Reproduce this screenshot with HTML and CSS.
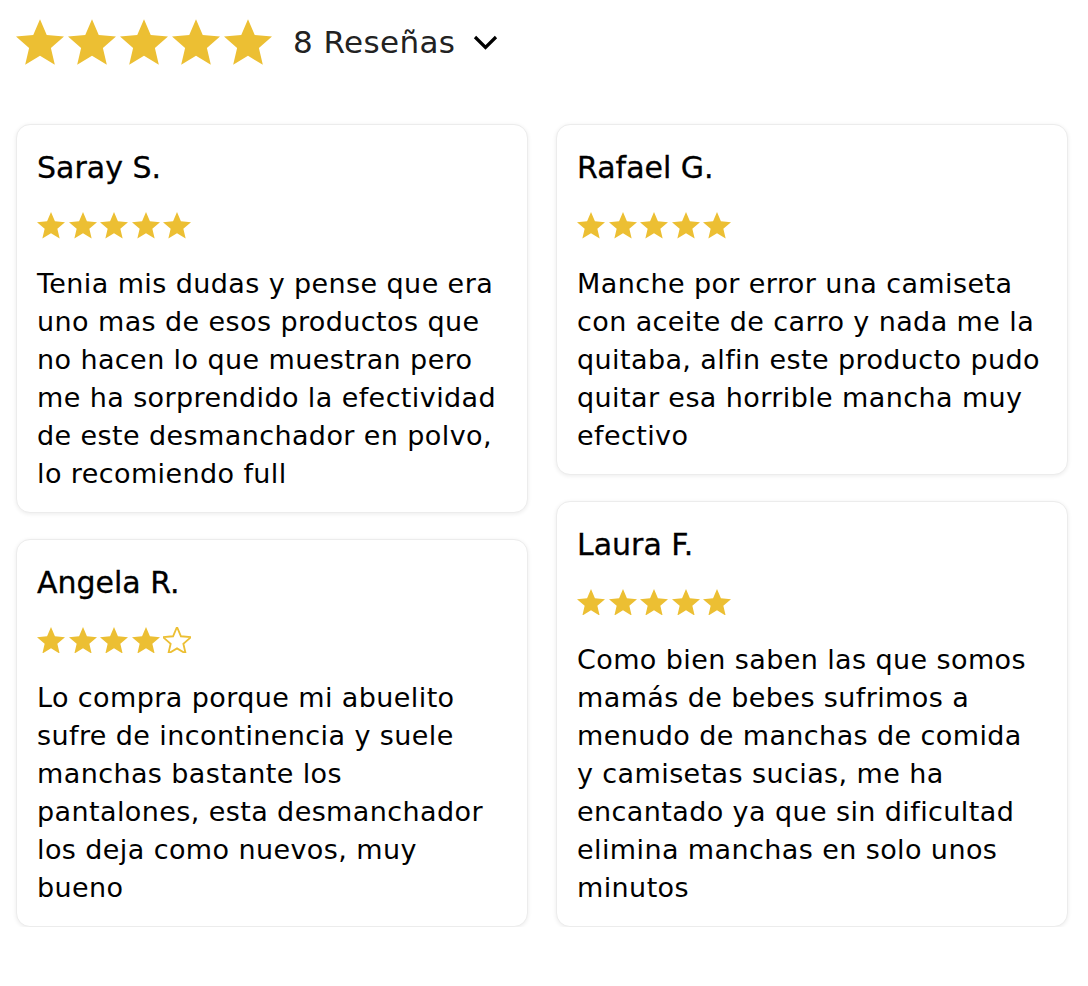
FILE: index.html
```html
<!DOCTYPE html>
<html lang="es">
<head>
<meta charset="utf-8">
<title>Reseñas</title>
<link rel="stylesheet" href="styles.css">
</head>
<body>
<header class="summary">
  <div class="stars stars-lg">
    <svg viewBox="2 2 20 19"><path d="M12 17.27L18.18 21l-1.64-7.03L22 9.24l-7.19-.61L12 2 9.19 8.63 2 9.24l5.46 4.73L5.82 21z"/></svg>
    <svg viewBox="2 2 20 19"><path d="M12 17.27L18.18 21l-1.64-7.03L22 9.24l-7.19-.61L12 2 9.19 8.63 2 9.24l5.46 4.73L5.82 21z"/></svg>
    <svg viewBox="2 2 20 19"><path d="M12 17.27L18.18 21l-1.64-7.03L22 9.24l-7.19-.61L12 2 9.19 8.63 2 9.24l5.46 4.73L5.82 21z"/></svg>
    <svg viewBox="2 2 20 19"><path d="M12 17.27L18.18 21l-1.64-7.03L22 9.24l-7.19-.61L12 2 9.19 8.63 2 9.24l5.46 4.73L5.82 21z"/></svg>
    <svg viewBox="2 2 20 19"><path d="M12 17.27L18.18 21l-1.64-7.03L22 9.24l-7.19-.61L12 2 9.19 8.63 2 9.24l5.46 4.73L5.82 21z"/></svg>
  </div>
  <span class="count">8 Reseñas</span>
  <svg class="chevron" viewBox="0 0 25 16"><path d="M2 3l10.5 10.5L23 3"/></svg>
</header>

<main class="reviews">
  <div class="column">
    <article class="card">
      <h3 class="name">Saray S.</h3>
      <div class="stars stars-sm">
        <svg viewBox="2 2 20 19"><path d="M12 17.27L18.18 21l-1.64-7.03L22 9.24l-7.19-.61L12 2 9.19 8.63 2 9.24l5.46 4.73L5.82 21z"/></svg>
        <svg viewBox="2 2 20 19"><path d="M12 17.27L18.18 21l-1.64-7.03L22 9.24l-7.19-.61L12 2 9.19 8.63 2 9.24l5.46 4.73L5.82 21z"/></svg>
        <svg viewBox="2 2 20 19"><path d="M12 17.27L18.18 21l-1.64-7.03L22 9.24l-7.19-.61L12 2 9.19 8.63 2 9.24l5.46 4.73L5.82 21z"/></svg>
        <svg viewBox="2 2 20 19"><path d="M12 17.27L18.18 21l-1.64-7.03L22 9.24l-7.19-.61L12 2 9.19 8.63 2 9.24l5.46 4.73L5.82 21z"/></svg>
        <svg viewBox="2 2 20 19"><path d="M12 17.27L18.18 21l-1.64-7.03L22 9.24l-7.19-.61L12 2 9.19 8.63 2 9.24l5.46 4.73L5.82 21z"/></svg>
      </div>
      <p class="text">Tenia mis dudas y pense que era uno mas de esos productos que no hacen lo que muestran pero me ha sorprendido la efectividad de este desmanchador en polvo, lo recomiendo full</p>
    </article>
    <article class="card">
      <h3 class="name">Angela R.</h3>
      <div class="stars stars-sm">
        <svg viewBox="2 2 20 19"><path d="M12 17.27L18.18 21l-1.64-7.03L22 9.24l-7.19-.61L12 2 9.19 8.63 2 9.24l5.46 4.73L5.82 21z"/></svg>
        <svg viewBox="2 2 20 19"><path d="M12 17.27L18.18 21l-1.64-7.03L22 9.24l-7.19-.61L12 2 9.19 8.63 2 9.24l5.46 4.73L5.82 21z"/></svg>
        <svg viewBox="2 2 20 19"><path d="M12 17.27L18.18 21l-1.64-7.03L22 9.24l-7.19-.61L12 2 9.19 8.63 2 9.24l5.46 4.73L5.82 21z"/></svg>
        <svg viewBox="2 2 20 19"><path d="M12 17.27L18.18 21l-1.64-7.03L22 9.24l-7.19-.61L12 2 9.19 8.63 2 9.24l5.46 4.73L5.82 21z"/></svg>
        <svg class="empty" viewBox="2 2 20 19"><path d="M12 17.27L18.18 21l-1.64-7.03L22 9.24l-7.19-.61L12 2 9.19 8.63 2 9.24l5.46 4.73L5.82 21z"/></svg>
      </div>
      <p class="text">Lo compra porque mi abuelito sufre de incontinencia y suele manchas bastante los pantalones, esta desmanchador los deja como nuevos, muy bueno</p>
    </article>
  </div>
  <div class="column">
    <article class="card">
      <h3 class="name">Rafael G.</h3>
      <div class="stars stars-sm">
        <svg viewBox="2 2 20 19"><path d="M12 17.27L18.18 21l-1.64-7.03L22 9.24l-7.19-.61L12 2 9.19 8.63 2 9.24l5.46 4.73L5.82 21z"/></svg>
        <svg viewBox="2 2 20 19"><path d="M12 17.27L18.18 21l-1.64-7.03L22 9.24l-7.19-.61L12 2 9.19 8.63 2 9.24l5.46 4.73L5.82 21z"/></svg>
        <svg viewBox="2 2 20 19"><path d="M12 17.27L18.18 21l-1.64-7.03L22 9.24l-7.19-.61L12 2 9.19 8.63 2 9.24l5.46 4.73L5.82 21z"/></svg>
        <svg viewBox="2 2 20 19"><path d="M12 17.27L18.18 21l-1.64-7.03L22 9.24l-7.19-.61L12 2 9.19 8.63 2 9.24l5.46 4.73L5.82 21z"/></svg>
        <svg viewBox="2 2 20 19"><path d="M12 17.27L18.18 21l-1.64-7.03L22 9.24l-7.19-.61L12 2 9.19 8.63 2 9.24l5.46 4.73L5.82 21z"/></svg>
      </div>
      <p class="text">Manche por error una camiseta con aceite de carro y nada me la quitaba, alfin este producto pudo quitar esa horrible mancha muy efectivo</p>
    </article>
    <article class="card">
      <h3 class="name">Laura F.</h3>
      <div class="stars stars-sm">
        <svg viewBox="2 2 20 19"><path d="M12 17.27L18.18 21l-1.64-7.03L22 9.24l-7.19-.61L12 2 9.19 8.63 2 9.24l5.46 4.73L5.82 21z"/></svg>
        <svg viewBox="2 2 20 19"><path d="M12 17.27L18.18 21l-1.64-7.03L22 9.24l-7.19-.61L12 2 9.19 8.63 2 9.24l5.46 4.73L5.82 21z"/></svg>
        <svg viewBox="2 2 20 19"><path d="M12 17.27L18.18 21l-1.64-7.03L22 9.24l-7.19-.61L12 2 9.19 8.63 2 9.24l5.46 4.73L5.82 21z"/></svg>
        <svg viewBox="2 2 20 19"><path d="M12 17.27L18.18 21l-1.64-7.03L22 9.24l-7.19-.61L12 2 9.19 8.63 2 9.24l5.46 4.73L5.82 21z"/></svg>
        <svg viewBox="2 2 20 19"><path d="M12 17.27L18.18 21l-1.64-7.03L22 9.24l-7.19-.61L12 2 9.19 8.63 2 9.24l5.46 4.73L5.82 21z"/></svg>
      </div>
      <p class="text">Como bien saben las que somos mamás de bebes sufrimos a menudo de manchas de comida y camisetas sucias, me ha encantado ya que sin dificultad elimina manchas en solo unos minutos</p>
    </article>
  </div>
</main>
</body>
</html>
```

FILE: styles.css
```css
* { box-sizing: border-box; }

body {
  margin: 0;
  background: #fff;
  font-family: "DejaVu Sans", "Noto Sans", sans-serif;
  color: #000;
}

.summary {
  display: flex;
  align-items: center;
  height: 84px;
  padding: 0 0 0 16px;
}

.stars {
  display: flex;
  fill: #ecbf33;
}

.stars-lg { gap: 4px; }
.stars-lg svg { width: 48px; height: 46px; }

.count {
  margin-left: 21px;
  font-size: 31px;
  letter-spacing: 0.4px;
  color: #222;
}

.chevron {
  width: 25px;
  height: 16px;
  margin-left: 18px;
  fill: none;
  stroke: #000;
  stroke-width: 3.2;
}

.reviews {
  display: grid;
  grid-template-columns: 512px 512px;
  column-gap: 28px;
  align-items: start;
  padding: 40px 20px 0 16px;
}

.column {
  display: flex;
  flex-direction: column;
  gap: 26px;
}

.card {
  border: 1px solid #ececec;
  border-radius: 14px;
  box-shadow: 0 1px 4px rgba(0, 0, 0, 0.08);
  padding: 21px 22px 19px 20px;
  background: #fff;
}

.name {
  margin: 0;
  font-size: 30px;
  font-weight: normal;
  line-height: 44px;
  -webkit-text-stroke: 0.3px #000;
}

.stars-sm {
  gap: 3.6px;
  margin-top: 22px;
}
.stars-sm svg { width: 28px; height: 26.6px; }
.stars-sm svg.empty {
  fill: none;
  stroke: #ecbf33;
  stroke-width: 1.3;
}

.text {
  margin: 26px 0 0;
  font-size: 27px;
  line-height: 38px;
  letter-spacing: 0.4px;
}
```
